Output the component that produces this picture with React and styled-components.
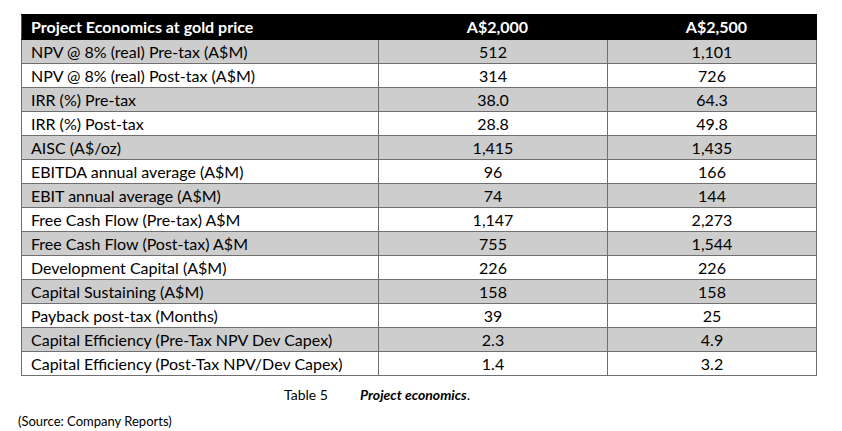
import React from 'react';
import styled, { createGlobalStyle } from 'styled-components';

const GlobalStyle = createGlobalStyle`
  body {
    margin: 0;
    background: #fff;
    font-family: Lato, 'Open Sans', sans-serif;
  }
`;

const rows = [
  ['NPV @ 8% (real) Pre-tax (A$M)', '512', '1,101'],
  ['NPV @ 8% (real) Post-tax (A$M)', '314', '726'],
  ['IRR (%) Pre-tax', '38.0', '64.3'],
  ['IRR (%) Post-tax', '28.8', '49.8'],
  ['AISC (A$/oz)', '1,415', '1,435'],
  ['EBITDA annual average (A$M)', '96', '166'],
  ['EBIT annual average (A$M)', '74', '144'],
  ['Free Cash Flow (Pre-tax) A$M', '1,147', '2,273'],
  ['Free Cash Flow (Post-tax) A$M', '755', '1,544'],
  ['Development Capital (A$M)', '226', '226'],
  ['Capital Sustaining (A$M)', '158', '158'],
  ['Payback post-tax (Months)', '39', '25'],
  ['Capital Efficiency (Pre-Tax NPV Dev Capex)', '2.3', '4.9'],
  ['Capital Efficiency (Post-Tax NPV/Dev Capex)', '1.4', '3.2'],
];

function App() {
  return (
    <Page>
      <GlobalStyle />
      <Table>
        <colgroup>
          <col style={{ width: 357 }} />
          <col style={{ width: 229 }} />
          <col style={{ width: 209 }} />
        </colgroup>
        <thead>
          <tr>
            <HeadCell>Project Economics at gold price</HeadCell>
            <HeadCell center>A$2,000</HeadCell>
            <HeadCell center>A$2,500</HeadCell>
          </tr>
        </thead>
        <tbody>
          {rows.map((r, i) => (
            <Row key={r[0]} shaded={i % 2 === 0}>
              <Cell>{r[0]}</Cell>
              <Cell center>{r[1]}</Cell>
              <Cell center>{r[2]}</Cell>
            </Row>
          ))}
        </tbody>
      </Table>
      <Caption>
        <CaptionLabel>Table 5</CaptionLabel>
        <CaptionTitle>Project economics</CaptionTitle>.
      </Caption>
      <Source>(Source: Company Reports)</Source>
    </Page>
  );
}

export default App;

const Page = styled.div`
  padding: 14px 0 0 21px;
  width: 842px;
  height: 431px;
  box-sizing: border-box;
  color: #000;
`;

const Table = styled.table`
  border-collapse: collapse;
  table-layout: fixed;
  width: 795px;
  font-size: 16px;
  border: 1px solid #6f6f6f;
`;

const HeadCell = styled.th`
  background: #000;
  color: #fff;
  font-weight: 700;
  text-align: ${(p) => (p.center ? 'center' : 'left')};
  height: 24px;
  padding: 0 0 0 9px;
  border: 1px solid #000;
  border-left-color: #555;
  line-height: 22px;
`;

const Row = styled.tr`
  background: ${(p) => (p.shaded ? '#cdcdcd' : '#fff')};
`;

const Cell = styled.td`
  border: 1px solid #6f6f6f;
  height: 23px;
  padding: 0 0 0 ${(p) => (p.center ? '0' : '9px')};
  text-align: ${(p) => (p.center ? 'center' : 'left')};
  line-height: 22px;
  white-space: nowrap;
`;

const Caption = styled.div`
  margin-top: 10px;
  padding-left: 263px;
  font-size: 14px;
  display: flex;
  align-items: baseline;
`;

const CaptionLabel = styled.span`
  width: 76px;
`;

const CaptionTitle = styled.span`
  font-weight: 700;
  font-style: italic;
`;

const Source = styled.div`
  margin-top: 10px;
  margin-left: -3px;
  font-size: 13px;
`;
